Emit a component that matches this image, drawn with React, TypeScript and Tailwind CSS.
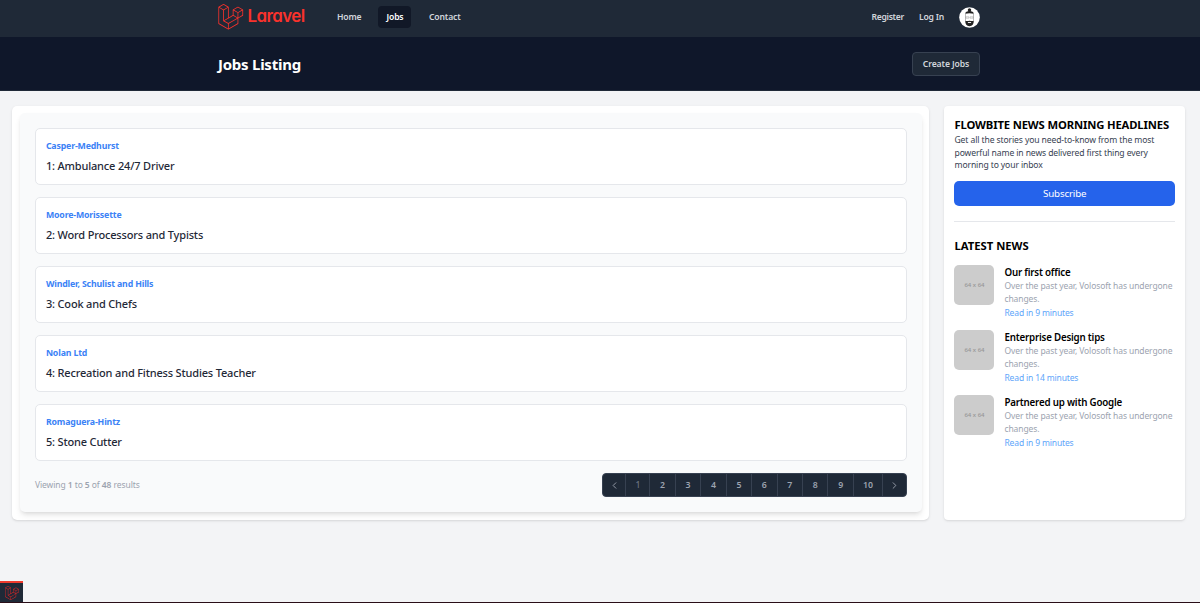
import { SiLaravel } from "react-icons/si";
import { FiChevronLeft, FiChevronRight } from "react-icons/fi";

const jobs = [
  { id: 1, company: "Casper-Medhurst", title: "Ambulance 24/7 Driver" },
  { id: 2, company: "Moore-Morissette", title: "Word Processors and Typists" },
  { id: 3, company: "Windler, Schulist and Hills", title: "Cook and Chefs" },
  { id: 4, company: "Nolan Ltd", title: "Recreation and Fitness Studies Teacher" },
  { id: 5, company: "Romaguera-Hintz", title: "Stone Cutter" },
];

const news = [
  { title: "Our first office", minutes: 9 },
  { title: "Enterprise Design tips", minutes: 14 },
  { title: "Partnered up with Google", minutes: 9 },
];

const pages = [2, 3, 4, 5, 6, 7, 8, 9];

const Avatar = () => {
  return (
    <svg className="size-[21px]" viewBox="0 0 21 21">
      <circle cx="10.5" cy="10.5" r="10.3" fill="#fff" />
      <path d="M9.3 4.2a1.700 1.700 0 1 1 2.400 0c1.900.3 3 1 3.100 2.600-2.400-.8-6.200-.8-8.600 0 .1-1.600 1.200-2.300 3.100-2.600z" fill="#222" />
      <path d="M6.500 6.500v7M14.500 6.500v7" stroke="#999" strokeWidth=".7" />
      <path d="M6.800 9.800h3.100v1.400H6.800zM11.100 9.800h3.100v1.400h-3.100z" fill="none" stroke="#999" strokeWidth=".5" />
      <path d="M6.300 13.600c1.600 1 2.700.2 4.200.2s2.600.8 4.200-.2c.3 3.500-1.500 5.700-4.200 5.700s-4.500-2.200-4.200-5.700z" fill="#222" />
      <path d="M8.900 15.500h3.200" stroke="#fff" strokeWidth=".9" />
    </svg>
  );
};

const Navbar = () => {
  return (
    <nav className="h-[37px] bg-[#1f2937]">
      <div className="mx-auto flex h-[34px] w-[764px] items-center pr-0.5 text-[8.600px] font-semibold tracking-[-0.15px] text-[#d1d5db]">
        <div className="flex w-[110px] items-center text-[#f9322c]">
          <SiLaravel className="size-[25.500px]" />
          <span className="ml-1 font-[Inter] text-[17px] font-semibold tracking-[-0.6px] [font-feature-settings:'cv11']">
            Laravel
          </span>
        </div>
        <a className="ml-[9px] pt-px">Home</a>
        <a className="ml-[17px] flex h-[22px] w-[33px] items-center justify-center rounded bg-[#111827] pt-px text-white">
          Jobs
        </a>
        <a className="ml-[17.500px] pt-px">Contact</a>
        <div className="ml-auto flex items-center">
          <a className="mr-[15px] pt-px tracking-[-0.3px]">Register</a>
          <a className="mr-[15px] pt-px tracking-[-0.2px]">Log In</a>
          <Avatar />
        </div>
      </div>
    </nav>
  );
};

const PageHeader = () => {
  return (
    <header className="h-[54px] border-b border-[#1f2937] bg-[#0f172a]">
      <div className="mx-auto flex h-full w-[764px] items-center justify-between pr-0.5">
        <h1 className="pt-[2px] text-[15px] font-bold tracking-[-0.25px] text-white">Jobs Listing</h1>
        <button className="h-6 w-[68px] rounded-[4px] border border-[#374151] bg-[#1f2937] pt-px text-[8.600px] font-semibold tracking-[-0.1px] text-[#d1d5db]">
          Create Jobs
        </button>
      </div>
    </header>
  );
};

const Pagination = () => {
  return (
    <div className="mt-3 flex h-6 items-center justify-between">
      <p className="pt-px text-[8.500px] tracking-[-0.08px] text-[#9ca3af]">
        Viewing <b className="font-semibold">1</b> to <b className="font-semibold">5</b> of{" "}
        <b className="font-semibold">48</b> results
      </p>
      <div className="flex h-6 w-[304.500px] divide-x divide-[#374151] overflow-hidden rounded-[4px] border border-[#374151] bg-[#1f2937] text-[8.750px] font-semibold text-[#9ca3af]">
        <span className="flex w-[23px] items-center justify-center">
          <FiChevronLeft size={11} />
        </span>
        <span className="flex w-6 items-center justify-center pt-px font-medium text-[#6b7280]">1</span>
        {pages.map((page) => (
          <a key={page} className="flex flex-1 items-center justify-center pt-px">
            {page}
          </a>
        ))}
        <a className="flex w-[29px] items-center justify-center pt-px">10</a>
        <span className="flex w-[23px] items-center justify-center">
          <FiChevronRight size={11} />
        </span>
      </div>
    </div>
  );
};

const JobList = () => {
  return (
    <section className="h-[413.500px] w-[917px] rounded-[5px] bg-white p-[7px] shadow-sm">
      <div className="ml-[0.500px] h-[399px] w-[902px] rounded-[5px] bg-[#f9fafb] px-[15px] pt-[15px] shadow-md">
        <div className="flex flex-col gap-3">
          {jobs.map((job) => (
            <a key={job.id} className="block h-[57px] rounded-[5px] border border-[#e5e7eb] bg-white px-[10px] pt-[11px]">
              <div className="text-[8.750px] leading-[13px] font-bold tracking-[-0.15px] text-[#3b82f6]">
                {job.company}
              </div>
              <div className="mt-[5px] text-[11px] leading-4 font-medium tracking-[-0.17px] text-[#1f2937]">
                {job.id}: {job.title}
              </div>
            </a>
          ))}
        </div>
        <Pagination />
      </div>
    </section>
  );
};

const Sidebar = () => {
  return (
    <aside className="h-[413.500px] w-[240.500px] rounded-[4px] bg-white px-[10px] pt-[10px] shadow-sm">
      <h2 className="text-[11.250px] leading-[18px] font-bold tracking-[-0.140px] whitespace-nowrap text-black">
        FLOWBITE NEWS MORNING HEADLINES
      </h2>
      <p className="text-[8.600px] leading-[12.500px] tracking-[-0.120px] whitespace-nowrap text-[#374151]">
        Get all the stories you need-to-know from the most
        <br />
        powerful name in news delivered first thing every
        <br />
        morning to your inbox
      </p>
      <button className="mt-[9px] block h-[25px] w-full rounded-[5px] bg-[#2563eb] pt-[2px] text-[9.750px] tracking-[-0.15px] text-white">
        Subscribe
      </button>
      <hr className="mt-[15px] border-[#e5e7eb]" />
      <h2 className="mt-[15px] text-[11.250px] leading-[18px] font-bold text-black">LATEST NEWS</h2>
      <div className="mt-[10px] flex flex-col">
        {news.map((item) => (
          <div key={item.title} className="flex h-[65.200px] gap-[10px]">
            <div className="flex size-10 shrink-0 items-center justify-center rounded-[5px] bg-[#cccccc] pt-0.5 text-[6px] font-medium text-[#969696]">
              64 x 64
            </div>
            <div className="pt-[0.500px] whitespace-nowrap">
              <h3 className="text-[9.750px] leading-[15px] font-semibold tracking-[-0.2px] text-black">{item.title}</h3>
              <p className="text-[8.500px] leading-[12.500px] tracking-[-0.1px] text-[#9ca3af]">
                Over the past year, Volosoft has undergone
                <br />
                changes.
              </p>
              <a className="mt-[2px] block text-[8.500px] leading-[12.500px] tracking-[-0.15px] text-[#60a5fa]">
                Read in {item.minutes} minutes
              </a>
            </div>
          </div>
        ))}
      </div>
    </aside>
  );
};

const App = () => {
  return (
    <div className="flex h-[603px] flex-col overflow-hidden bg-[#f3f4f6] font-['Noto_Sans',sans-serif]">
      <Navbar />
      <PageHeader />
      <main className="flex gap-[15.100px] pt-[15px] pl-[12.400px]">
        <JobList />
        <Sidebar />
      </main>
      <footer className="mt-auto border-b border-[#2a0e18]">
        <div className="flex h-[21px] w-[23px] items-center justify-center border-t-2 border-[#ef3b2d] bg-[#1f2937] text-[#dc2626]">
          <SiLaravel size={14} />
        </div>
      </footer>
    </div>
  );
};

export default App;
